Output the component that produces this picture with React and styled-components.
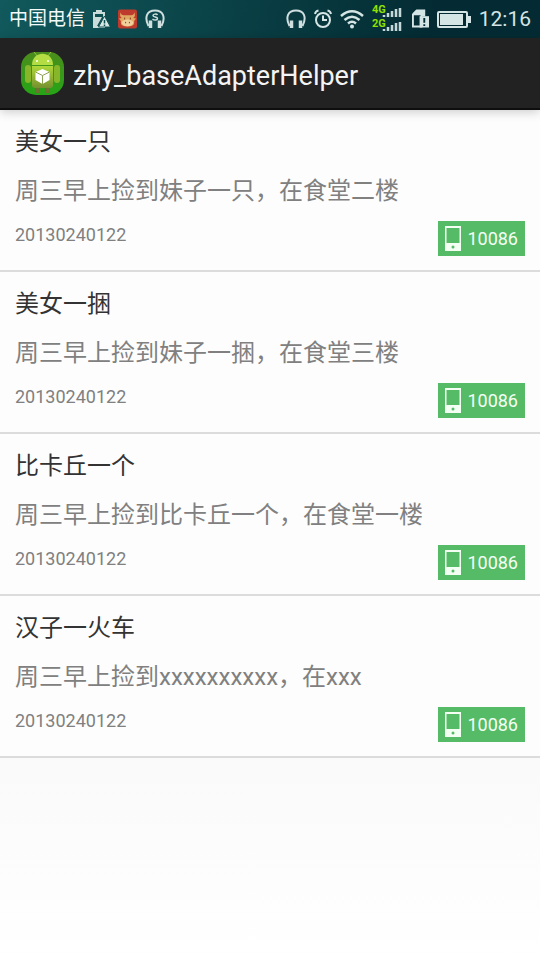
import React from 'react';
import styled, { createGlobalStyle } from 'styled-components';

const GlobalStyle = createGlobalStyle`
  * {
    box-sizing: border-box;
  }
  body {
    margin: 0;
    min-height: 100vh;
    background: linear-gradient(#f5f5f5, #fafafa 80%, #ffffff) no-repeat;
    font-family: Roboto, 'Noto Sans CJK SC', sans-serif;
  }
`;

const StatusBar = styled.div`
  display: flex;
  align-items: center;
  justify-content: space-between;
  height: 38px;
  padding: 0 9px;
  background: linear-gradient(100deg, #11595c, #0a4247 40%, #042b33 80%);
  color: #d5e5e5;
`;

const StatusGroup = styled.div`
  display: flex;
  align-items: center;
  gap: 8px;
`;

const Carrier = styled.span`
  color: #f2fafa;
  font-size: 19px;
  line-height: 24px;
`;

const Clock = styled.time`
  font-size: 21px;
  line-height: 24px;
`;

const Icon = styled.svg`
  display: block;
  flex: none;
`;

const NetworkLabel = styled.text`
  fill: #8fe000;
  font-family: Roboto, sans-serif;
  font-size: 11px;
  font-weight: 700;
`;

const ActionBar = styled.header`
  position: relative;
  display: flex;
  align-items: center;
  gap: 8px;
  height: 72px;
  padding: 0 20px;
  background: #222222;
  border-bottom: 2px solid #0e0e0e;
  box-shadow: 0 2px 10px rgba(0, 0, 0, 0.2);
`;

const AppTitle = styled.h1`
  margin: 0;
  padding-top: 5px;
  color: #f4f4f4;
  font-size: 27px;
  font-weight: 400;
  line-height: 36px;
`;

const List = styled.ul`
  margin: 0;
  padding: 0;
  list-style: none;
`;

const Item = styled.li`
  padding: 15px 15px 14px;
  background: #fdfdfd;
  border-bottom: 2px solid #dcdcdc;
`;

const ItemTitle = styled.h2`
  margin: 0 0 14px;
  color: #333333;
  font-size: 24px;
  font-weight: 400;
  line-height: 35px;
`;

const Description = styled.p`
  margin: 0 0 12px;
  color: #808080;
  font-size: 24px;
  line-height: 35px;
`;

const ItemFooter = styled.div`
  display: flex;
  align-items: flex-start;
  justify-content: space-between;
`;

const DateText = styled.span`
  color: #808080;
  font-size: 18px;
  line-height: 28px;
`;

const Phone = styled.span`
  display: flex;
  align-items: center;
  gap: 6px;
  height: 35px;
  padding: 0 7px;
  background: #56bb66;
  color: #f4fff4;
  font-size: 18px;
`;

const BatteryWarning = () => (
  <Icon width="17" height="20" viewBox="0 0 17 20">
    <path d="M3 1h6v2h3v16H0V3h3z" fill="#c9dcd9" />
    <path d="M2 5h8v3H2zM9 8l-5 9h2l5-9z" fill="#0d4e51" />
    <path d="M11.500 7L17.500 18H5.500z" fill="#d9e8e5" stroke="#0d4e51" />
    <path d="M11.500 11v3.500M11.500 15.500V17" stroke="#0d4e51" strokeWidth="1.500" />
  </Icon>
);

const BullBadge = () => (
  <Icon width="19" height="20" viewBox="0 0 20 20">
    <rect width="20" height="20" rx="2" fill="#bd3a2c" />
    <path d="M3 3q0 3 3 3h8q3 0 3-3 2 4-1 6l3 .5-2 2.500v2q0 4-7 4t-7-4v-2L1 9.500 4 9Q1 7 3 3z" fill="#e0aa62" />
    <ellipse cx="10" cy="14" rx="6" ry="3.500" fill="#f0cf9d" />
    <path d="M7 8.500v2M13 8.500v2M8 13v1.500M12 13v1.500" stroke="#7e3b24" />
  </Icon>
);

const Headphones = ({ music }) => (
  <Icon width="20" height="20" viewBox="0 0 20 20" fill="none" stroke="#cfdfdf">
    <path d="M3.500 17C-1 8 2 1.500 10 1.500S21 8 16.500 17" strokeWidth="2" />
    <path d="M5.500 11.500v7.500M14.500 11.500v7.500" strokeWidth="3.500" />
    {music && <path d="M12.500 6c-1-1.500-4.500-1-4.500.5 0 2 4.500 1 4.500 3 0 2-3.500 2-5 .5" strokeWidth="1.500" />}
  </Icon>
);

const AlarmClock = () => (
  <Icon width="18" height="20" viewBox="1 0 18 20" fill="none" stroke="#d5e5e5" strokeWidth="2">
    <circle cx="10" cy="11" r="7" />
    <path d="M10 6.500V11h4M2 5Q2.500 2 5.500 1.500M18 5Q17.500 2 14.500 1.500" />
  </Icon>
);

const Wifi = () => (
  <Icon width="24" height="20" viewBox="1 0 24 20" fill="none" stroke="#d5e5e5" strokeWidth="2.500">
    <path d="M2 7q11-9.500 22 0M5.500 11q7.500-6.500 15 0M9 14.500q4-3.500 8 0" />
    <circle cx="13" cy="17.500" r="2" fill="#d5e5e5" stroke="none" />
  </Icon>
);

const Signal = () => (
  <Icon width="32" height="34" viewBox="0 0 32 34">
    <NetworkLabel x="0" y="11">4G</NetworkLabel>
    <NetworkLabel x="0" y="25">2G</NetworkLabel>
    <path
      d="M12 15v-2M16 15v-4M20 15V9M24 15V7M28 15V6M12 29v-2M16 29v-4M20 29v-6M24 29v-8M28 29v-9"
      stroke="#c5d9da"
      strokeWidth="2.500"
    />
  </Icon>
);

const SimWarning = () => (
  <Icon width="17" height="20" viewBox="0 0 18 20">
    <path d="M1 18V5l4-4h8v5h-3v12z" fill="none" stroke="#d5e5e5" strokeWidth="2" />
    <path d="M1 4l3-3h9v5H1z" fill="#d5e5e5" />
    <path d="M8 7h10v12H8z" fill="#d5e5e5" />
    <path d="M13 9v5M13 15.500v2" stroke="#042b33" strokeWidth="2" />
  </Icon>
);

const Battery = () => (
  <Icon width="34" height="17" viewBox="0 0 34 17">
    <rect x="1" y="1" width="29" height="15" rx="1" fill="none" stroke="#d5e5e5" strokeWidth="2" />
    <path d="M3 3h23v11H3zM31 5h3v7h-3z" fill="#d5e5e5" />
  </Icon>
);

const AppIcon = () => (
  <Icon width="45" height="45" viewBox="0 0 45 45">
    <defs>
      <linearGradient id="tile" x2="0" y2="1">
        <stop offset="0" stopColor="#4c8c1c" />
        <stop offset="1" stopColor="#25a516" />
      </linearGradient>
      <linearGradient id="robot" x2="0" y2="1">
        <stop offset="0" stopColor="#aed83a" />
        <stop offset="1" stopColor="#76902f" />
      </linearGradient>
    </defs>
    <rect x="1" y="1" width="43" height="43" rx="15" fill="url(#tile)" />
    <path d="M14 1l4 5M31 1l-4 5" stroke="#91c83e" />
    <rect x="5" y="14" width="6" height="18" rx="3" fill="#88b62b" />
    <rect x="34" y="14" width="6" height="18" rx="3" fill="#88b62b" />
    <path d="M12 14C12-1 33-1 33 14z" fill="#b4dd44" />
    <path d="M12 15h21v19q0 3-3 3H15q-3 0-3-3z" fill="url(#robot)" />
    <path d="M15 37h5v5h-5zM25 37h5v5h-5z" fill="#6d7132" />
    <circle cx="17" cy="10" r="1" fill="#fff" />
    <circle cx="28" cy="10" r="1" fill="#fff" />
    <path d="M22.500 18l7 3v8l-7 4-7-4v-8z" fill="#fff" />
    <path d="M15.500 21l7 3.500 7-3.500M22.500 24.500V33" fill="none" stroke="#8ba255" />
  </Icon>
);

const PhoneIcon = () => (
  <Icon width="16" height="25" viewBox="0 0 16 25">
    <path d="M0 0h16v25H0zM1.500 2v15h13V2z" fill="#f4fff4" fillRule="evenodd" />
    <circle cx="8" cy="21" r="1.500" fill="#56bb66" />
  </Icon>
);

const items = [
  { title: '美女一只', desc: '周三早上捡到妹子一只，在食堂二楼', date: '20130240122', phone: '10086' },
  { title: '美女一捆', desc: '周三早上捡到妹子一捆，在食堂三楼', date: '20130240122', phone: '10086' },
  { title: '比卡丘一个', desc: '周三早上捡到比卡丘一个，在食堂一楼', date: '20130240122', phone: '10086' },
  { title: '汉子一火车', desc: '周三早上捡到xxxxxxxxxx，在xxx', date: '20130240122', phone: '10086' },
];

const App = () => (
  <>
    <GlobalStyle />
    <StatusBar>
      <StatusGroup>
        <Carrier>中国电信</Carrier>
        <BatteryWarning />
        <BullBadge />
        <Headphones music />
      </StatusGroup>
      <StatusGroup>
        <Headphones />
        <AlarmClock />
        <Wifi />
        <Signal />
        <SimWarning />
        <Battery />
        <Clock>12:16</Clock>
      </StatusGroup>
    </StatusBar>
    <ActionBar>
      <AppIcon />
      <AppTitle>zhy_baseAdapterHelper</AppTitle>
    </ActionBar>
    <List>
      {items.map(item => (
        <Item key={item.title}>
          <ItemTitle>{item.title}</ItemTitle>
          <Description>{item.desc}</Description>
          <ItemFooter>
            <DateText>{item.date}</DateText>
            <Phone>
              <PhoneIcon />
              {item.phone}
            </Phone>
          </ItemFooter>
        </Item>
      ))}
    </List>
  </>
);

export default App;
